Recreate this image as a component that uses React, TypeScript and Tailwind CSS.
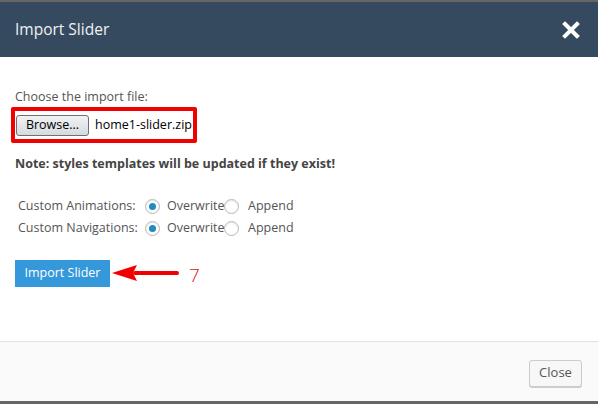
import React from "react";

function Radio({ checked }: { checked: boolean }) {
  return (
    <span className="inline-flex h-[15px] w-[15px] shrink-0 items-center justify-center rounded-full border border-[#b4b9be] bg-white shadow-[inset_0_1px_2px_rgba(0,0,0,0.1)]">
      {checked && <span className="h-[7px] w-[7px] rounded-full bg-[#1e8cbe]" />}
    </span>
  );
}

function Row({ label }: { label: string }) {
  return (
    <div className="flex h-[22px] items-center whitespace-nowrap">
      <span className="w-[127px] shrink-0">{label}</span>
      <Radio checked />
      <span className="ml-[7px] w-[57px] shrink-0">Overwrite</span>
      <Radio checked={false} />
      <span className="ml-[9px]">Append</span>
    </div>
  );
}

export default function App() {
  return (
    <div
      className="flex h-[404px] w-[598px] flex-col bg-[#666] text-[12.5px] text-[#444]"
      style={{ fontFamily: '"Open Sans", "Noto Sans", sans-serif' }}
    >
      <div className="mt-[2px] flex h-[55px] items-center justify-between bg-[#364a5f] pl-[15px] pr-[18px]">
        <span className="text-[15.5px] text-[#eef2f5]">Import Slider</span>
        <svg width="18" height="18" viewBox="0 0 18 18">
          <path d="M3 3 L15 15 M15 3 L3 15" stroke="#fff" strokeWidth="4" strokeLinecap="square" />
        </svg>
      </div>
      <div className="flex flex-1 flex-col bg-white pl-[15px] pt-[32px]">
        <div className="leading-[16px] text-[#555]">Choose the import file:</div>
        <div className="ml-[-4px] mt-[2px] flex h-[36px] w-[186px] items-center whitespace-nowrap rounded-[2px] border-[4px] border-[#f00000] pl-[1px]">
          <button className="flex h-[21px] w-[73px] shrink-0 items-center justify-center rounded-[3px] border border-[#707070] bg-gradient-to-b from-[#f2f2f2] to-[#d4dbe0] text-[12.5px] text-black">
            Browse...
          </button>
          <span className="ml-[6px] text-[12.5px] text-black">home1-slider.zip</span>
        </div>
        <div className="mt-[12px] font-bold text-[#444]">Note: styles templates will be updated if they exist!</div>
        <div className="ml-[3px] mt-[22px] flex flex-col text-[#555]">
          <Row label="Custom Animations:" />
          <Row label="Custom Navigations:" />
        </div>
        <div className="mt-[17px] flex items-center">
          <button className="h-[27px] w-[95px] bg-[#3498db] text-[12.5px] text-white">Import Slider</button>
          <svg width="70" height="20" viewBox="0 0 70 20" className="ml-[1px]">
            <path d="M66 10 L24 10" stroke="#f00000" strokeWidth="4" strokeLinecap="round" />
            <path d="M1 10 L26 2 L22 10 L26 18 Z" fill="#f00000" />
          </svg>
          <span className="ml-[8px] mt-[4px] text-[19px] font-light text-[#e02020]">
            7
          </span>
        </div>
      </div>
      <div className="flex h-[60px] items-center justify-end border-t border-[#e1e1e1] bg-[#fafafa] pr-[16px]">
        <button className="mt-[3px] h-[27px] w-[53px] rounded-[3px] border border-[#ccc] bg-[#f7f7f7] text-[13px] text-[#555] shadow-[0_1px_0_#ccc]">
          Close
        </button>
      </div>
      <div className="h-[3px]" />
    </div>
  );
}
